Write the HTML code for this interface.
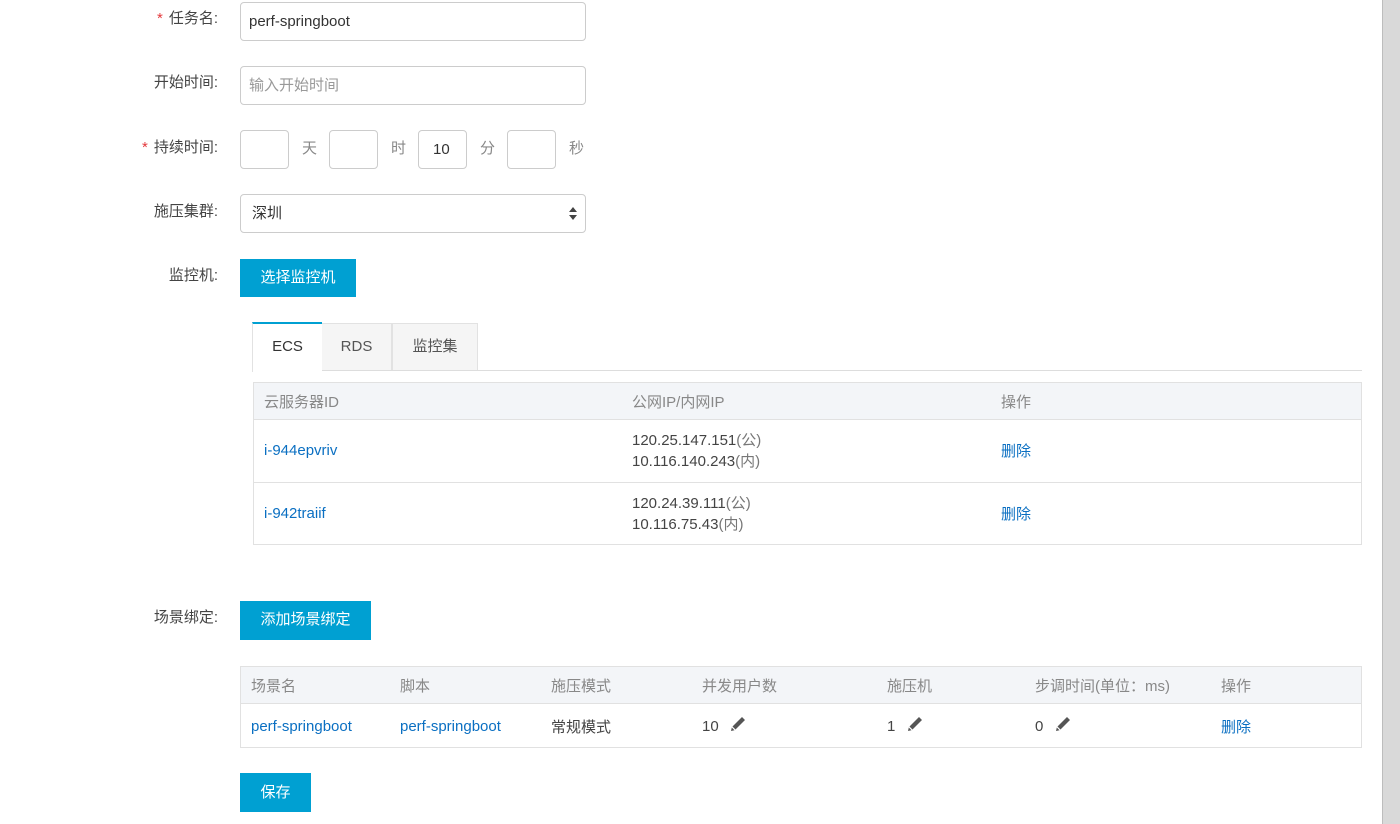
<!DOCTYPE html>
<html><head><meta charset="utf-8"><style>
body{margin:0;width:1400px;height:824px;background:#fff;position:relative;overflow:hidden;font-family:"Liberation Sans","Noto Sans CJK SC",sans-serif;font-size:15px;color:#333}
.a{position:absolute}
.lbl{position:absolute;color:#444;font-size:15px;text-align:right;width:110px;left:108px}
.star{color:#e4393c;margin-right:6px}
.inp{position:absolute;border:1px solid #ccc;border-radius:4px;box-sizing:border-box;background:#fff;line-height:38px;padding-left:8px;font-size:15px}
.unit{position:absolute;color:#888;font-size:15px}
.btn{position:absolute;background:#00a0d2;color:#fff;font-size:15px;text-align:center;line-height:38px;height:38px}
.th{position:absolute;color:#888;font-size:15px}
.lk{color:#0a6fc2;position:absolute}
.pen{position:absolute;width:16px;height:16px}
</style></head><body>
<div class="lbl" style="top:7px"><span class="star">*</span>任务名:</div>
<div class="inp" style="left:240px;top:2px;width:346px;height:39px;color:#333">perf-springboot</div>
<div class="lbl" style="top:71px">开始时间:</div>
<div class="inp" style="left:240px;top:66px;width:346px;height:39px;color:#999">输入开始时间</div>
<div class="lbl" style="top:136px"><span class="star">*</span>持续时间:</div>
<div class="inp" style="left:240px;top:130px;width:49px;height:39px"></div><div class="unit" style="left:302px;top:137px">天</div>
<div class="inp" style="left:329px;top:130px;width:49px;height:39px"></div><div class="unit" style="left:391px;top:137px">时</div>
<div class="inp" style="left:418px;top:130px;width:49px;height:39px;padding-left:14px">10</div><div class="unit" style="left:480px;top:137px">分</div>
<div class="inp" style="left:507px;top:130px;width:49px;height:39px"></div><div class="unit" style="left:569px;top:137px">秒</div>
<div class="lbl" style="top:200px">施压集群:</div>
<div class="inp" style="left:240px;top:194px;width:346px;height:39px;padding-left:11px">深圳</div>
<svg class="a" style="left:569px;top:207px" width="8" height="13"><path d="M4 0L8 5H0Z M0 8H8L4 13Z" fill="#444"/></svg>
<div class="lbl" style="top:264px">监控机:</div>
<div class="btn" style="left:240px;top:259px;width:116px">选择监控机</div>
<div class="a" style="left:252px;top:370px;width:1110px;height:1px;background:#ddd"></div>
<div class="a" style="left:321px;top:323px;width:71px;height:47px;background:#f5f5f5;border:1px solid #e2e2e2;border-bottom:none;box-sizing:border-box;text-align:center;line-height:46px;color:#555">RDS</div>
<div class="a" style="left:392px;top:323px;width:86px;height:47px;background:#f5f5f5;border:1px solid #e2e2e2;border-bottom:none;box-sizing:border-box;text-align:center;line-height:46px;color:#555">监控集</div>
<div class="a" style="left:252px;top:322px;width:70px;height:50px;background:#fff;border-top:2px solid #00a0d2;border-left:1px solid #e2e2e2;box-sizing:border-box;text-align:center;line-height:46px;color:#333">ECS</div>
<div class="a" style="left:253px;top:382px;width:1109px;height:163px;border:1px solid #e1e1e1;box-sizing:border-box"></div>
<div class="a" style="left:254px;top:383px;width:1107px;height:36px;background:#f3f5f8;border-bottom:1px solid #e1e1e1"></div>
<div class="a" style="left:254px;top:482px;width:1107px;height:1px;background:#e1e1e1"></div>
<div class="th" style="left:264px;top:391px">云服务器ID</div>
<div class="th" style="left:632px;top:391px">公网IP/内网IP</div>
<div class="th" style="left:1001px;top:391px">操作</div>
<div class="lk" style="left:264px;top:442px">i-944epvriv</div>
<div class="a" style="left:632px;top:430px;line-height:21px;color:#444">120.25.147.151<span style="color:#777">(公)</span><br>10.116.140.243<span style="color:#777">(内)</span></div>
<div class="lk" style="left:1001px;top:440px">删除</div>
<div class="lk" style="left:264px;top:505px">i-942traiif</div>
<div class="a" style="left:632px;top:493px;line-height:21px;color:#444">120.24.39.111<span style="color:#777">(公)</span><br>10.116.75.43<span style="color:#777">(内)</span></div>
<div class="lk" style="left:1001px;top:503px">删除</div>
<div class="lbl" style="top:606px">场景绑定:</div>
<div class="btn" style="left:240px;top:601px;width:131px;height:39px">添加场景绑定</div>
<div class="a" style="left:240px;top:666px;width:1122px;height:82px;border:1px solid #e1e1e1;box-sizing:border-box"></div>
<div class="a" style="left:241px;top:667px;width:1120px;height:36px;background:#f3f5f8;border-bottom:1px solid #e1e1e1"></div>
<div class="th" style="left:251px;top:675px">场景名</div>
<div class="th" style="left:400px;top:675px">脚本</div>
<div class="th" style="left:551px;top:675px">施压模式</div>
<div class="th" style="left:702px;top:675px">并发用户数</div>
<div class="th" style="left:887px;top:675px">施压机</div>
<div class="th" style="left:1035px;top:675px">步调时间(单位：ms)</div>
<div class="th" style="left:1221px;top:675px">操作</div>
<div class="lk" style="left:251px;top:718px">perf-springboot</div>
<div class="lk" style="left:400px;top:718px">perf-springboot</div>
<div class="a" style="left:551px;top:716px;color:#444">常规模式</div>
<div class="a" style="left:702px;top:718px;color:#444">10</div>
<svg class="pen" style="left:730px;top:716px" viewBox="0 0 16 16"><path d="M12 1l3 3-9.5 9.5-3-3z M1.8 11.5l2.7 2.7L1 15z" fill="#555"/></svg>
<div class="a" style="left:887px;top:718px;color:#444">1</div>
<svg class="pen" style="left:907px;top:716px" viewBox="0 0 16 16"><path d="M12 1l3 3-9.5 9.5-3-3z M1.8 11.5l2.7 2.7L1 15z" fill="#555"/></svg>
<div class="a" style="left:1035px;top:718px;color:#444">0</div>
<svg class="pen" style="left:1055px;top:716px" viewBox="0 0 16 16"><path d="M12 1l3 3-9.5 9.5-3-3z M1.8 11.5l2.7 2.7L1 15z" fill="#555"/></svg>
<div class="lk" style="left:1221px;top:716px">删除</div>
<div class="btn" style="left:240px;top:773px;width:71px;height:39px;line-height:39px">保存</div>
<div class="a" style="left:1382px;top:0;width:18px;height:824px;background:#d9d9d9;border-left:1px solid #bdbdbd"></div>
</body></html>
